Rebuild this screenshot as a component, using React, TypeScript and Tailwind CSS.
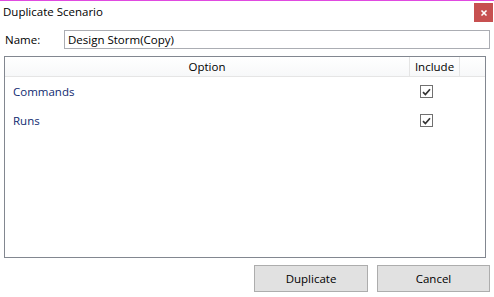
import { X } from 'lucide-react'

const options = ['Commands', 'Runs']

function CheckMark() {
  return (
    <span className="flex h-[13px] w-[13px] items-center justify-center border border-[#707070] bg-white">
      <svg width="9" height="8" viewBox="0 0 9 8">
        <path d="M1 4.2 L3.4 6.6 L8 1.2" fill="none" stroke="#333" strokeWidth="1.7" />
      </svg>
    </span>
  )
}

export default function App() {
  return (
    <div
      className="flex h-[297px] w-[494px] flex-col border-t border-[#e04ae0] bg-white text-[11.5px] text-black"
      style={{ fontFamily: '"Open Sans", "Noto Sans", sans-serif' }}
    >
      {/* title bar */}
      <div className="flex h-[22px] items-start justify-between">
        <span className="pl-[3px] pt-[3px] leading-[16px]">Duplicate Scenario</span>
        <button className="mr-[1px] mt-[2px] flex h-[19px] w-[19px] items-center justify-center bg-[#c75050] text-white">
          <X size={8} strokeWidth={5} />
        </button>
      </div>

      {/* name */}
      <div className="mt-[7px] flex items-center pr-[4px]">
        <span className="w-[64px] pl-[5px]">Name:</span>
        <div className="flex h-[19px] flex-1 items-center border border-[#abadb3] px-[3px] leading-none">
          Design Storm(Copy)
        </div>
      </div>

      {/* options grid */}
      <div className="ml-[4px] mr-[8px] mt-[7px] flex h-[202px] flex-col border border-[#828790]">
        <div className="flex h-[20px] border-b border-[#e5e5e5] bg-gradient-to-b from-white to-[#f7f8f9]">
          <div className="flex flex-1 items-center justify-center border-r border-[#e5e5e5]">Option</div>
          <div className="flex w-[50px] items-center justify-center border-r border-[#e5e5e5]">Include</div>
          <div className="w-[25px]" />
        </div>
        {options.map((o) => (
          <div key={o} className="flex h-[29px] items-center">
            <span className="flex-1 pl-[8px] text-[#0f2a70]">{o}</span>
            <div className="mr-[52px] flex w-[13px] justify-center">
              <CheckMark />
            </div>
          </div>
        ))}
      </div>

      {/* buttons */}
      <div className="mt-[7px] flex justify-end gap-[9px] pr-[4px]">
        <button className="h-[27px] w-[114px] border border-[#adadad] bg-[#e1e1e1]">Duplicate</button>
        <button className="h-[27px] w-[113px] border border-[#adadad] bg-[#e1e1e1]">Cancel</button>
      </div>
    </div>
  )
}
